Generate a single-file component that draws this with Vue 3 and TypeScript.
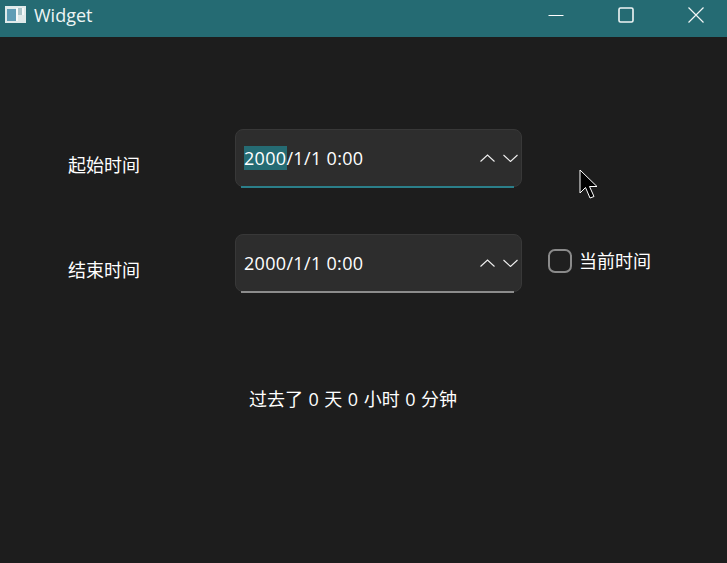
<script setup lang="ts">
interface TimeRow {
  label: string
  value: string
  active: boolean
  showCheck: boolean
}

const rows: TimeRow[] = [
  { label: '起始时间', value: '2000/1/1 0:00', active: true, showCheck: false },
  { label: '结束时间', value: '2000/1/1 0:00', active: false, showCheck: true }
]
</script>

<template>
  <div class="window">
    <header class="titlebar">
      <svg class="app-icon" width="21" height="17" viewBox="0 0 21 17">
        <rect x="0" y="0" width="21" height="17" fill="#dfeaea" />
        <rect x="2" y="3" width="9" height="12" fill="#5f9db5" />
        <rect x="11" y="2" width="2" height="13" fill="#f6f9f9" />
        <rect x="13" y="2" width="6" height="7" fill="#a9c4c8" />
        <rect x="17" y="2" width="2" height="7" fill="#f4f8f8" />
      </svg>
      <span class="title">Widget</span>
      <div class="controls">
        <button class="ctl">
          <svg width="16" height="16" viewBox="0 0 16 16"><path d="M0.5 8.5H15.5" stroke="#fff" fill="none" /></svg>
        </button>
        <button class="ctl">
          <svg width="16" height="16" viewBox="0 0 16 16"><rect x="1" y="1" width="14" height="14" rx="1.5" stroke="#f0f5f5" stroke-width="1.6" fill="none" /></svg>
        </button>
        <button class="ctl">
          <svg width="16" height="16" viewBox="0 0 16 16"><path d="M0.5 0.5L15.5 15.5M15.5 0.5L0.5 15.5" stroke="#f2f6f6" stroke-width="1.2" fill="none" /></svg>
        </button>
      </div>
    </header>

    <main class="content">
      <div v-for="row in rows" :key="row.label" class="row">
        <label class="row-label">{{ row.label }}</label>
        <div class="spin" :class="{ 'spin--active': row.active }">
          <span class="spin-text">
            <template v-if="row.active"><span class="sel">2000</span>/1/1 0:00</template>
            <template v-else>{{ row.value }}</template>
          </span>
          <svg class="arrow" width="15" height="8" viewBox="0 0 15 8"><path d="M0.500 7.500L7.500 1L14.500 7.500" stroke="#f0f0f0" stroke-width="1.1" fill="none" /></svg>
          <svg class="arrow arrow--down" width="15" height="8" viewBox="0 0 15 8"><path d="M0.500 1L7.500 7.500L14.500 1" stroke="#f0f0f0" stroke-width="1.1" fill="none" /></svg>
        </div>
        <div v-if="row.showCheck" class="check">
          <span class="check-box"></span>
          <span class="check-label">当前时间</span>
        </div>
      </div>
      <p class="result">过去了 0 天 0 小时 0 分钟</p>
    </main>

    <svg class="cursor" width="20" height="32" viewBox="0 0 20 32">
      <path d="M1 1V24L6.5 18.5L11 29L15 27.500L10.500 17.500H18Z" fill="#000" stroke="#fff" stroke-width="1" />
    </svg>
  </div>
</template>

<style scoped>
.window {
  position: relative;
  width: 727px;
  height: 563px;
  overflow: hidden;
  background: #1d1d1d;
  color: #fff;
  font-family: 'Open Sans', 'Noto Sans CJK SC', sans-serif;
  font-size: 18px;
}

.titlebar {
  height: 37px;
  display: flex;
  align-items: center;
  padding-left: 5px;
  box-sizing: border-box;
  background: #256b73;
}

.app-icon {
  margin-top: -9px;
}

.title {
  margin-left: 8px;
  margin-top: -7px;
  font-size: 18px;
  color: #eef5f5;
}

.controls {
  margin-left: auto;
  margin-right: -4px;
  display: flex;
  height: 100%;
}

.ctl {
  width: 70px;
  padding: 0 0 7px;
  display: flex;
  align-items: center;
  justify-content: center;
  border: none;
  background: transparent;
}

.content {
  padding: 92px 0 0 68px;
  display: flex;
  flex-direction: column;
  gap: 47px;
}

.row {
  display: flex;
  align-items: flex-start;
}

.row-label {
  width: 167px;
  margin-top: 23px;
  line-height: 26px;
}

.spin {
  position: relative;
  width: 287px;
  height: 58px;
  box-sizing: border-box;
  padding: 0 3px 0 8px;
  display: flex;
  align-items: center;
  gap: 8px;
  background: #2d2d2d;
  border: 1px solid #383838;
  border-radius: 8px;
}

.spin::after {
  content: '';
  position: absolute;
  left: 5px;
  right: 7px;
  bottom: -2px;
  height: 2px;
  background: #8c8c8c;
}

.spin--active::after {
  background: #2b7f8a;
}

.spin-text {
  flex: 1;
  line-height: 24px;
  white-space: nowrap;
  letter-spacing: 0.32px;
}

.sel {
  padding-right: 1px;
  margin-right: -1px;
  background: #256b73;
}

.check {
  margin: 15px 0 0 26px;
  display: flex;
  align-items: center;
  gap: 7px;
}

.check-box {
  width: 24px;
  height: 24px;
  box-sizing: border-box;
  border: 2px solid #8a8a8a;
  border-radius: 7px;
  background: #1f1f1f;
}

.check-label {
  line-height: 24px;
}

.result {
  margin: 47px 0 0 181px;
  line-height: 26px;
  word-spacing: 0.85px;
}

.cursor {
  position: absolute;
  left: 579px;
  top: 169px;
}
</style>
